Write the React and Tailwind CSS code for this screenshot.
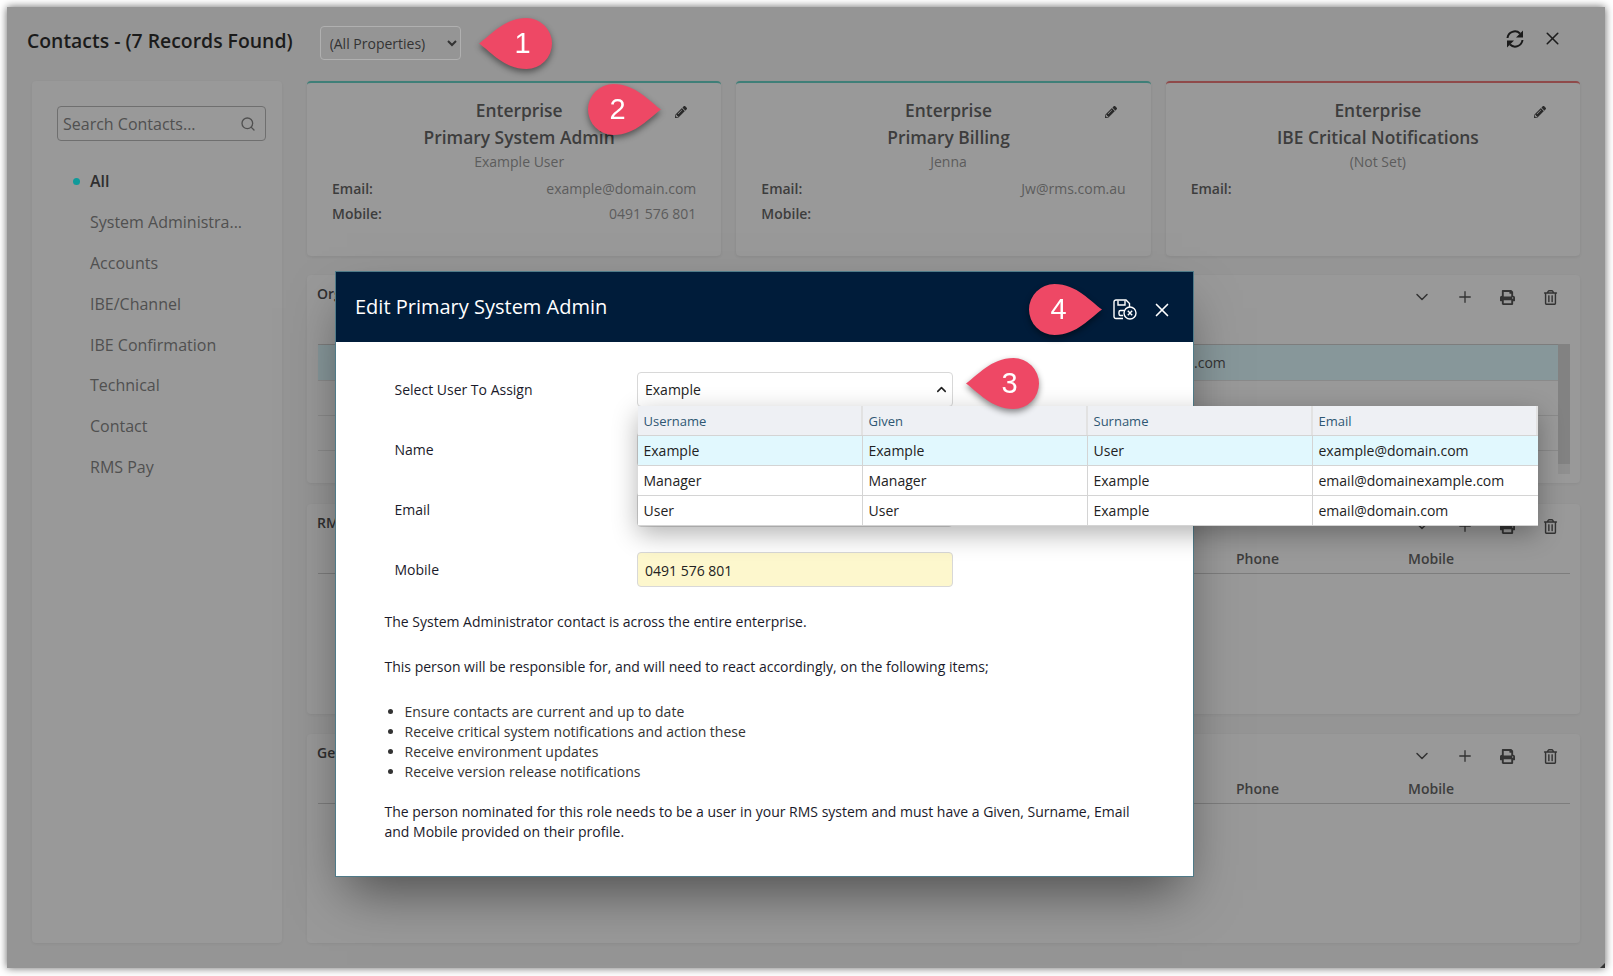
import { ChevronDown, ChevronUp, Plus, Search, X } from 'lucide-react';
import { FaPencilAlt, FaPrint, FaRegTrashAlt } from 'react-icons/fa';

const navItems = ['System Administra...', 'Accounts', 'IBE/Channel', 'IBE Confirmation', 'Technical', 'Contact', 'RMS Pay'];

const contactCards = [
  { title: 'Primary System Admin', name: 'Example User', email: 'example@domain.com', mobile: '0491 576 801', bar: 'border-t-[#3f7f78]' },
  { title: 'Primary Billing', name: 'Jenna', email: 'Jw@rms.com.au', mobile: '', bar: 'border-t-[#3f7f78]' },
  { title: 'IBE Critical Notifications', name: '(Not Set)', email: '', bar: 'border-t-[#8f4a4a]' },
];

const users = [
  ['Example', 'Example', 'User', 'example@domain.com'],
  ['Manager', 'Manager', 'Example', 'email@domainexample.com'],
  ['User', 'User', 'Example', 'email@domain.com'],
];

function RefreshIcon() {
  return (
    <svg width="20" height="20" viewBox="0 0 20 20" fill="none" className="text-[#1a1a1a]">
      <path d="M2.5 9a7.5 7.5 0 0 1 12.5-4.6M17.5 11a7.5 7.5 0 0 1-12.5 4.6" stroke="currentColor" strokeWidth="2" />
      <path d="M18 1.5v7h-7zM2 18.5v-7h7z" fill="currentColor" />
    </svg>
  );
}

function SaveCancelIcon() {
  return (
    <svg width="24" height="21" viewBox="0 0 24 21" fill="none" stroke="white" strokeWidth="1.4">
      <path d="M10 19.5H3a2 2 0 0 1-2-2V3a2 2 0 0 1 2-2h10l3.5 3.5V8" />
      <path d="M5 1.5v4.5h7V1.5" />
      <path d="M11 11.5H7.5a1.5 1.5 0 0 0-1.5 1.5v2a1.5 1.5 0 0 0 1.5 1.5H10" />
      <circle cx="17" cy="14" r="6" fill="#001c3a" />
      <path d="M14.8 11.8l4.4 4.4M19.2 11.8l-4.4 4.4" />
    </svg>
  );
}

// numbered callout, the tip points left or right
function Marker({ digit, flip, className }) {
  return (
    <div className={`absolute h-[51px] w-[73px] drop-shadow-[0_3px_3px_rgba(0,0,0,0.45)] ${className}`}>
      <svg width="73" height="51" viewBox="0 0 73 51" className={flip ? '-scale-x-100' : ''}>
        <path d="M73 25.5C62 33 48 51 25.5 51a25.5 25.5 0 0 1 0-51C48 0 62 18 73 25.5Z" fill="#ee4865" />
      </svg>
      <span className={`absolute top-0 flex h-[51px] w-[51px] items-center justify-center font-['Liberation_Sans',sans-serif] text-[29px] text-white ${flip ? 'right-[4px]' : 'left-[4px]'}`}>
        {digit}
      </span>
    </div>
  );
}

function ContactCard({ title, name, email, mobile, bar }) {
  return (
    <div className={`relative h-[175px] rounded-[4px] border-t-2 bg-[#999999] px-[25px] pt-[14px] shadow-[0_1px_3px_rgba(0,0,0,0.08)] ${bar}`}>
      <FaPencilAlt className="absolute right-[34px] top-[23px] text-[#2a2a2a]" size={12} />
      <div className="pl-[10px] text-center text-[17.4px] font-semibold leading-[27px] text-[#3d3d3d]">
        Enterprise
        <br />
        {title}
      </div>
      <div className="mt-[1px] pl-[10px] text-center text-[14px] leading-[20px] text-[#5c5c5c]">{name}</div>
      <div className="mt-[4px] flex h-[25px] items-center justify-between text-[14px] text-[#5c5c5c]">
        <span className="font-semibold text-[#3d3d3d]">Email:</span>
        <span>{email}</span>
      </div>
      {mobile !== undefined && (
        <div className="flex h-[25px] items-center justify-between text-[14px] text-[#5c5c5c]">
          <span className="font-semibold text-[#3d3d3d]">Mobile:</span>
          <span>{mobile}</span>
        </div>
      )}
    </div>
  );
}

function Section({ title, height, columns, children }) {
  return (
    <div className={`rounded-[4px] bg-[#999999] pl-[11px] pr-[10px] shadow-[0_1px_3px_rgba(0,0,0,0.06)] ${height}`}>
      <div className="flex h-[44px] items-center justify-between">
        <span className="-ml-[1px] -mt-[7px] text-[14px] font-semibold text-[#2f2f2f]">{title}</span>
        <div className="-mr-[2px] flex items-center text-[#333333]">
          <span className="flex w-[42px] justify-center"><ChevronDown size={20} strokeWidth={1.8} /></span>
          <span className="flex w-[43px] justify-center"><Plus size={18} strokeWidth={1.8} /></span>
          <span className="flex w-[43px] justify-center"><FaPrint size={15} /></span>
          <span className="flex w-[43px] justify-center"><FaRegTrashAlt size={15} /></span>
        </div>
      </div>
      {columns && (
        <div className="grid h-[26px] grid-cols-[918px_172px_1fr] items-center border-b border-[#7d7d7d] pb-[4px] text-[14px] font-semibold text-[#3d3d3d]">
          <span />
          <span>Phone</span>
          <span>Mobile</span>
        </div>
      )}
      {children}
    </div>
  );
}

function UserDropdown() {
  return (
    <div className="absolute left-[302px] top-[134px] w-[900px] bg-white text-[14px] text-[#222222] shadow-[0_8px_24px_rgba(0,0,0,0.3)]">
      <div className="grid h-[30px] grid-cols-[225px_225px_225px_1fr] border-b border-[#d4d4d4] bg-[#eef0f4] text-[13px] text-[#2f5773]">
        {['Username', 'Given', 'Surname', 'Email'].map((col) => (
          <div key={col} className="flex items-center border-r-2 border-[#e2e2e2] pl-[5.5px] pt-[2px]">{col}</div>
        ))}
      </div>
      {users.map((row, i) => (
        <div key={row[0]} className={`grid h-[30px] grid-cols-[225px_225px_225px_1fr] border-b border-[#d4d4d4] ${i === 0 ? 'bg-[#e1f8fe]' : 'bg-white'}`}>
          {row.map((cell, j) => (
            <div key={j} className={`flex items-center pl-[5.5px] ${j < 3 ? 'border-r border-[#d4d4d4]' : ''}`}>{cell}</div>
          ))}
        </div>
      ))}
    </div>
  );
}

function EditModal() {
  const formInput = 'h-[35px] w-[316px] rounded-[4px] border border-[#d8d8d8] px-[7px] text-[14px] text-[#222222] flex items-center';

  return (
    <div className="absolute left-[328px] top-[264px] h-[606px] w-[859px] border border-[#4f7a88] bg-white shadow-[0_25px_50px_-12px_rgba(0,0,0,0.5)]">
      <div className="flex h-[70px] items-center justify-between bg-[#001c3a] pl-[19px] pr-[20px]">
        <span className="text-[20px] text-white">Edit Primary System Admin</span>
        <div className="mt-[5px] flex items-center gap-[14px]">
          <SaveCancelIcon />
          <X size={22} strokeWidth={1.8} className="text-white" />
        </div>
      </div>

      <div className="px-[48.5px] pt-[30px] text-[14px] leading-[20px] text-[#1a1a2a]">
        <div className="flex flex-col gap-[25px] pl-[10px]">
          <div className="flex items-center">
            <span className="w-[242.5px]">Select User To Assign</span>
            <div className={`${formInput} justify-between pr-[3px]`}>
              Example
              <ChevronUp size={15} strokeWidth={2.5} />
            </div>
          </div>
          <div className="flex items-center">
            <span className="w-[242.5px]">Name</span>
            <div className={formInput} />
          </div>
          <div className="flex items-center">
            <span className="w-[242.5px]">Email</span>
            <div className={formInput} />
          </div>
          <div className="flex items-center">
            <span className="w-[242.5px]">Mobile</span>
            <div className={`${formInput} bg-[#fdf7cd] pt-[2px]`}>0491 576 801</div>
          </div>
        </div>

        <p className="mt-[25px]">The System Administrator contact is across the entire enterprise.</p>
        <p className="mt-[25px]">This person will be responsible for, and will need to react accordingly, on the following items;</p>
        <ul className="mt-[25px] list-disc pl-[20px] text-[#333333]">
          <li>Ensure contacts are current and up to date</li>
          <li>Receive critical system notifications and action these</li>
          <li>Receive environment updates</li>
          <li>Receive version release notifications</li>
        </ul>
        <p className="mt-[20px]">
          The person nominated for this role needs to be a user in your RMS system and must have a Given, Surname, Email and Mobile provided on their profile.
        </p>
      </div>

      <UserDropdown />
    </div>
  );
}

export default function App() {
  return (
    <div className="h-[976px] w-[1613px] overflow-hidden bg-white pl-[7px] pt-[7px] font-['Open_Sans','Noto_Sans',sans-serif]">
      <div className="relative h-[961px] w-[1598px] bg-[#959595] shadow-[0_0_8px_rgba(0,0,0,0.6)]">
        {/* Title bar */}
        <div className="flex h-[74px] items-center pb-[6px] pl-[20px] pr-[42px]">
          <h1 className="text-[19.4px] font-semibold text-[#1b1b1b]">Contacts - (7 Records Found)</h1>
          <select className="ml-[27px] mt-[4px] h-[34px] w-[141px] rounded-[4px] border border-[#b0b0b0] px-[5px] text-[14px] text-[#333333]">
            <option>(All Properties)</option>
          </select>
          <div className="ml-auto -mt-[5px] flex items-center gap-[17px]">
            <RefreshIcon />
            <X size={21} strokeWidth={1.8} className="text-[#1d1d1d]" />
          </div>
        </div>

        <div className="flex gap-[25px] px-[25px]">
          {/* Sidebar */}
          <aside className="h-[862px] w-[250px] rounded-[4px] bg-[#999999] px-[25px] pt-[25px] shadow-[0_1px_3px_rgba(0,0,0,0.06)]">
            <div className="flex h-[35px] w-[209px] items-center justify-between rounded-[4px] border border-[#6f6f6f] pl-[5px] pr-[9px] text-[16px] text-[#505050]">
              Search Contacts...
              <Search size={16} />
            </div>
            <ul className="mt-[20px] text-[16px] text-[#505050]">
              <li className="relative flex h-[40.8px] items-center pl-[33px] font-semibold text-[#2f2f2f]">
                <span className="absolute left-[16px] h-[7px] w-[7px] rounded-full bg-[#0f9a9a]" />
                All
              </li>
              {navItems.map((item) => (
                <li key={item} className="flex h-[40.8px] items-center pl-[33px]">{item}</li>
              ))}
            </ul>
          </aside>

          <main className="flex-1">
            <div className="grid grid-cols-3 gap-[15px]">
              {contactCards.map((card) => (
                <ContactCard key={card.title} {...card} />
              ))}
            </div>

            <div className="mt-[19px]">
              <Section title="Organisation" height="h-[208px]">
                <div className="mt-[25px] flex h-[130px] overflow-hidden">
                  <div className="flex-1 border-t border-[#7d7d7d] text-[14px] text-[#333333]">
                    <div className="flex h-[35px] items-center bg-[#87979a] pl-[876px]">.com</div>
                    <div className="h-[35px] border-t border-[#8a8a8a]" />
                    <div className="h-[35px] border-t border-[#8a8a8a]" />
                    <div className="h-[35px] border-t border-[#8a8a8a]" />
                  </div>
                  <div className="w-[12px] bg-[#8f8f8f]">
                    <div className="h-[120px] bg-[#828282]" />
                  </div>
                </div>
              </Section>
            </div>
            <div className="mt-[21px]">
              <Section title="RMS" height="h-[210px]" columns />
            </div>
            <div className="mt-[20px]">
              <Section title="General" height="h-[209px]" columns />
            </div>
          </main>
        </div>

        <EditModal />

        <Marker digit="1" flip className="left-[472px] top-[11px]" />
        <Marker digit="2" className="left-[581px] top-[77px]" />
        <Marker digit="3" flip className="left-[959px] top-[351px]" />
        <Marker digit="4" className="left-[1022px] top-[277px]" />

        {/* resize grip */}
        <span className="absolute bottom-0 right-0 h-0 w-0 border-b-[5px] border-l-[5px] border-b-[#333333] border-l-transparent" />
      </div>
    </div>
  );
}
